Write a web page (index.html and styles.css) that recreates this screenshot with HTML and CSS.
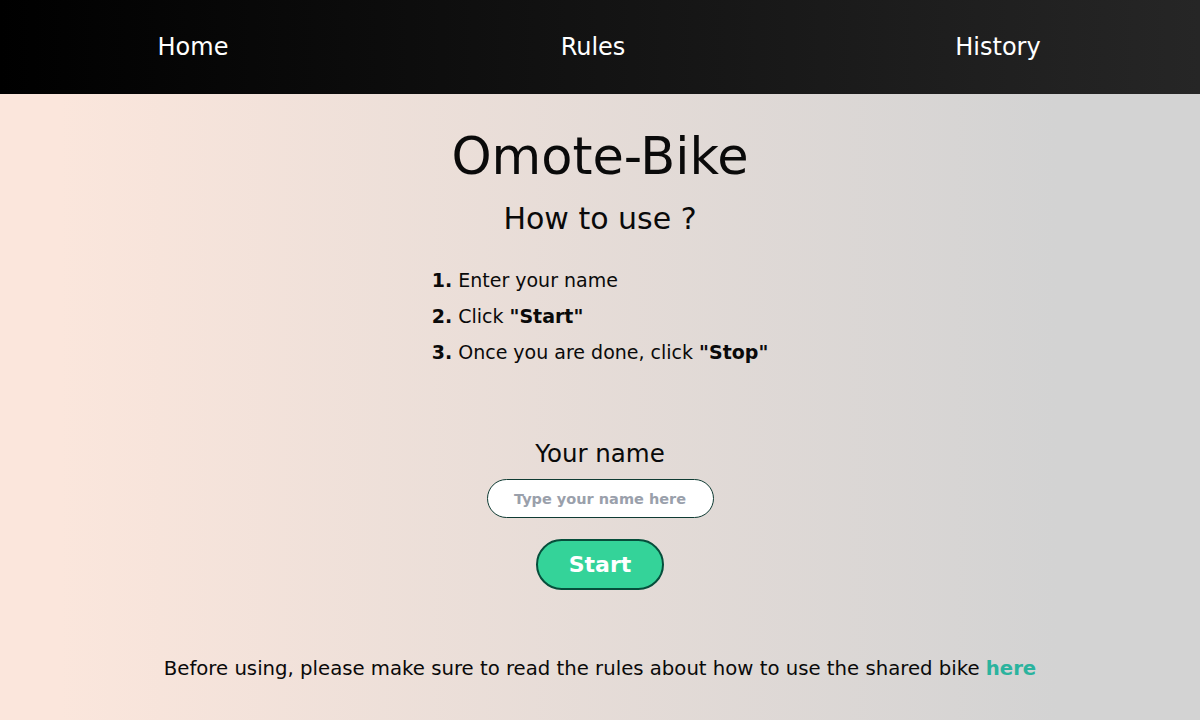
FILE: index.html
```html
<!DOCTYPE html>
<html lang="en">
<head>
<meta charset="utf-8">
<title>Omote-Bike</title>
<link rel="stylesheet" href="styles.css">
</head>
<body>
<nav class="nav">
  <a class="nav-link" href="#">Home</a>
  <a class="nav-link" href="#">Rules</a>
  <a class="nav-link" href="#">History</a>
</nav>
<main class="main">
  <h1 class="title">Omote-Bike</h1>
  <h2 class="subtitle">How to use ?</h2>
  <ol class="steps">
    <li><b>1.</b> Enter your name</li>
    <li><b>2.</b> Click <b>"Start"</b></li>
    <li><b>3.</b> Once you are done, click <b>"Stop"</b></li>
  </ol>
  <form class="form">
    <label class="label" for="name">Your name</label>
    <input class="input" id="name" type="text" placeholder="Type your name here">
    <button class="start" type="button">Start</button>
  </form>
  <p class="note">Before using, please make sure to read the rules about how to use the shared bike <a class="here" href="#">here</a></p>
</main>
</body>
</html>
```
FILE: styles.css
```css
* { box-sizing: border-box; }
html, body { margin: 0; padding: 0; }
body {
  font-family: "DejaVu Sans", "Noto Sans", sans-serif;
  color: #0a0a0a;
  height: 720px;
  overflow: hidden;
  background: linear-gradient(to right, #fbe6dc 5%, #d3d3d3 88%);
}
.nav {
  height: 94px;
  display: grid;
  grid-template-columns: 386px 414px 396px;
  align-items: center;
  background: linear-gradient(to right, #000 0%, #262626 100%);
}
.nav-link {
  color: #fff;
  text-decoration: none;
  font-size: 24px;
  text-align: center;
}
.main {
  display: flex;
  flex-direction: column;
  align-items: center;
}
.title {
  margin: 30px 0 0;
  font-size: 51px;
  font-weight: 400;
  line-height: 66px;
}
.subtitle {
  margin: 0;
  font-size: 30px;
  font-weight: 400;
  line-height: 58px;
}
.steps {
  list-style: none;
  margin: 14px 0 0;
  padding: 0;
  font-size: 19px;
  line-height: 36px;
}
.form {
  display: flex;
  flex-direction: column;
  align-items: center;
  margin-top: 67px;
}
.label {
  font-size: 24.5px;
  line-height: 34px;
}
.input {
  margin-top: 8px;
  width: 227px;
  height: 39px;
  border: 1px solid #0f3b33;
  border-radius: 20px;
  background: #fff;
  font-family: inherit;
  font-size: 14.5px;
  font-weight: 700;
  text-align: center;
  outline: none;
}
.input::placeholder { color: #9aa0ab; }
.start {
  margin-top: 21px;
  width: 128px;
  height: 51px;
  border: 2px solid #064e3b;
  border-radius: 26px;
  background: #34d399;
  color: #fff;
  font-family: inherit;
  font-size: 22px;
  font-weight: 700;
}
.note {
  margin: 67px 0 0;
  font-size: 19.7px;
  line-height: 24px;
}
.here {
  color: #2bb39e;
  font-weight: 700;
  text-decoration: none;
}
```
